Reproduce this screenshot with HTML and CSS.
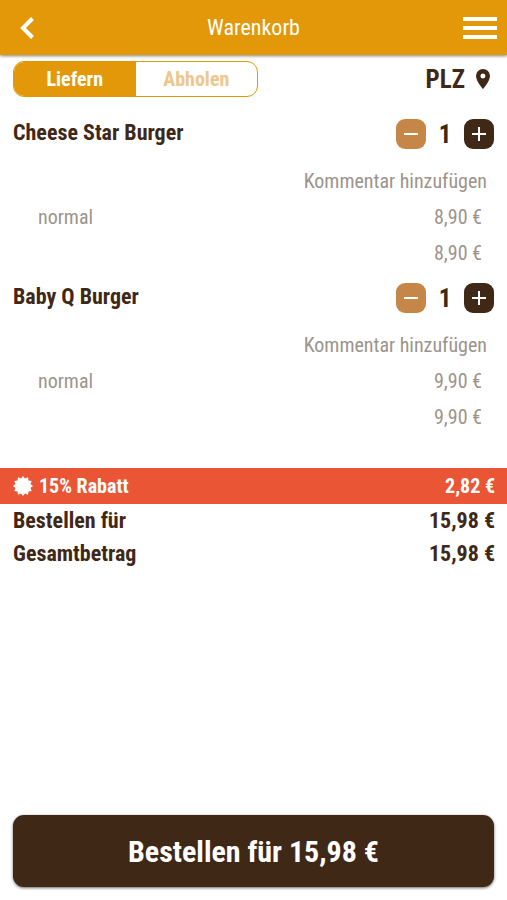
FILE: index.html
```html
<!DOCTYPE html>
<html lang="de">
<head>
  <meta charset="UTF-8">
  <meta name="viewport" content="width=device-width, initial-scale=1">
  <title>Warenkorb</title>
  <link rel="stylesheet" href="styles.css">
</head>
<body>
  <header class="topbar">
    <button class="icon-btn back" type="button" aria-label="Zurück">
      <svg width="14" height="24" viewBox="0 0 14 24"><path d="M12.500 2.500L3 12l9.500 9.500" fill="none" stroke="#fff" stroke-width="4"/></svg>
    </button>
    <h1>Warenkorb</h1>
    <button class="icon-btn menu" type="button" aria-label="Menü">
      <svg width="34" height="24" viewBox="0 0 34 24"><path d="M0 3h34M0 12h34M0 21h34" stroke="#fff" stroke-width="4"/></svg>
    </button>
  </header>

  <main>
    <div class="delivery">
      <div class="toggle">
        <button class="active" type="button">Liefern</button>
        <button type="button">Abholen</button>
      </div>
      <button class="plz" type="button">
        PLZ
        <svg width="14" height="20" viewBox="0 0 14 20"><path fill="#402817" fill-rule="evenodd" d="M7 0a7 7 0 0 0-7 7c0 5.200 7 13 7 13s7-7.800 7-13a7 7 0 0 0-7-7zm0 9.500a2.500 2.500 0 1 1 0-5 2.500 2.500 0 0 1 0 5z"/></svg>
      </button>
    </div>

    <section class="item">
      <div class="item-head">
        <h2>Cheese Star Burger</h2>
        <div class="counter">
          <button class="minus" type="button" aria-label="Weniger"><svg width="14" height="14" viewBox="0 0 14 14"><path d="M0 7h14" stroke="#fff" stroke-width="2"/></svg></button>
          <span>1</span>
          <button class="plus" type="button" aria-label="Mehr"><svg width="14" height="14" viewBox="0 0 14 14"><path d="M0 7h14M7 0v14" stroke="#fff" stroke-width="2"/></svg></button>
        </div>
      </div>
      <button class="comment" type="button">Kommentar hinzufügen</button>
      <div class="line"><span>normal</span><span>8,90 €</span></div>
      <div class="line sum"><span>8,90 €</span></div>
    </section>

    <section class="item">
      <div class="item-head">
        <h2>Baby Q Burger</h2>
        <div class="counter">
          <button class="minus" type="button" aria-label="Weniger"><svg width="14" height="14" viewBox="0 0 14 14"><path d="M0 7h14" stroke="#fff" stroke-width="2"/></svg></button>
          <span>1</span>
          <button class="plus" type="button" aria-label="Mehr"><svg width="14" height="14" viewBox="0 0 14 14"><path d="M0 7h14M7 0v14" stroke="#fff" stroke-width="2"/></svg></button>
        </div>
      </div>
      <button class="comment" type="button">Kommentar hinzufügen</button>
      <div class="line"><span>normal</span><span>9,90 €</span></div>
      <div class="line sum"><span>9,90 €</span></div>
    </section>

    <section class="totals">
      <div class="discount">
        <span class="label">
          <svg width="20" height="20" viewBox="-10 -10 20 20">
            <path fill="#fff" d="M0-10L2-7.500 5-8.700 5.500-5.500 8.700-5 7.500-2 10 0 7.500 2 8.700 5 5.500 5.500 5 8.700 2 7.500 0 10-2 7.500-5 8.700-5.500 5.500-8.700 5-7.500 2-10 0-7.500-2-8.700-5-5.500-5.500-5-8.700-2-7.500z"/>
          </svg>
          15% Rabatt
        </span>
        <span>2,82 €</span>
      </div>
      <div class="total"><span>Bestellen für</span><span>15,98 €</span></div>
      <div class="total"><span>Gesamtbetrag</span><span>15,98 €</span></div>
    </section>
  </main>

  <footer>
    <button class="order" type="button">Bestellen für 15,98 €</button>
  </footer>
</body>
</html>
```
FILE: styles.css
```css
* {
  box-sizing: border-box;
}

body {
  display: flex;
  flex-direction: column;
  min-height: 100vh;
  margin: 0;
  background: #fff;
  color: #402817;
  font-family: "Roboto Condensed", Roboto, sans-serif;
  font-size: 20px;
}

button {
  padding: 0;
  border: none;
  background: none;
  color: inherit;
  font: inherit;
  cursor: pointer;
}

svg {
  display: block;
}

h1, h2 {
  margin: 0;
}

.topbar {
  display: grid;
  grid-template-columns: 1fr auto 1fr;
  align-items: center;
  height: 55px;
  padding: 0 10px;
  background: #e29808;
  color: #fff;
  box-shadow: 0 1px 3px rgba(0, 0, 0, 0.5);
}

.topbar h1 {
  font-size: 22px;
  font-weight: 400;
}

.back {
  justify-self: start;
  margin-left: 10px;
}

.menu {
  justify-self: end;
}

main {
  flex: 1;
}

.delivery {
  display: flex;
  justify-content: space-between;
  align-items: center;
  padding: 6px 17px 10px 13px;
}

.toggle {
  display: flex;
  width: 245px;
  height: 36px;
  border: 1px solid #e29808;
  border-radius: 11px;
  overflow: hidden;
}

.toggle button {
  flex: 1;
  color: #f0c68c;
  font-weight: 700;
}

.toggle .active {
  background: #e29808;
  color: #fff;
}

.plz {
  display: flex;
  align-items: center;
  gap: 11px;
  font-size: 25px;
  font-weight: 700;
}

.item {
  padding: 6px 13px 0;
}

.item-head {
  display: flex;
  justify-content: space-between;
  align-items: center;
  height: 42px;
}

.item-head h2 {
  padding-bottom: 4px;
  font-size: 22px;
  font-weight: 700;
}

.counter {
  display: flex;
  align-items: center;
}

.counter span {
  width: 38px;
  text-align: center;
  font-size: 25px;
  font-weight: 700;
}

.counter button {
  display: flex;
  justify-content: center;
  align-items: center;
  width: 30px;
  height: 30px;
  border-radius: 9px;
}

.minus {
  background: #c68647;
}

.plus {
  background: #402817;
}

.comment {
  display: block;
  height: 36px;
  margin: 8px 7px 0 auto;
  color: #9c948c;
}

.line {
  display: flex;
  justify-content: space-between;
  align-items: center;
  height: 36px;
  padding: 0 12px 0 25px;
  color: #9c948c;
}

.sum {
  justify-content: flex-end;
}

.totals {
  margin-top: 33px;
  font-weight: 700;
}

.discount, .total {
  display: flex;
  justify-content: space-between;
  align-items: center;
  padding: 0 12px 0 13px;
}

.discount {
  height: 36px;
  background: #ea5536;
  color: #fff;
}

.label {
  display: flex;
  align-items: center;
  gap: 6px;
}

.total {
  height: 33px;
  font-size: 22px;
}

footer {
  padding: 12px 13px 13px;
}

.order {
  width: 100%;
  height: 72px;
  border-radius: 11px;
  background: #402817;
  color: #fff;
  font-size: 30px;
  font-weight: 700;
  box-shadow: 0 1px 3px rgba(0, 0, 0, 0.6);
}
```
